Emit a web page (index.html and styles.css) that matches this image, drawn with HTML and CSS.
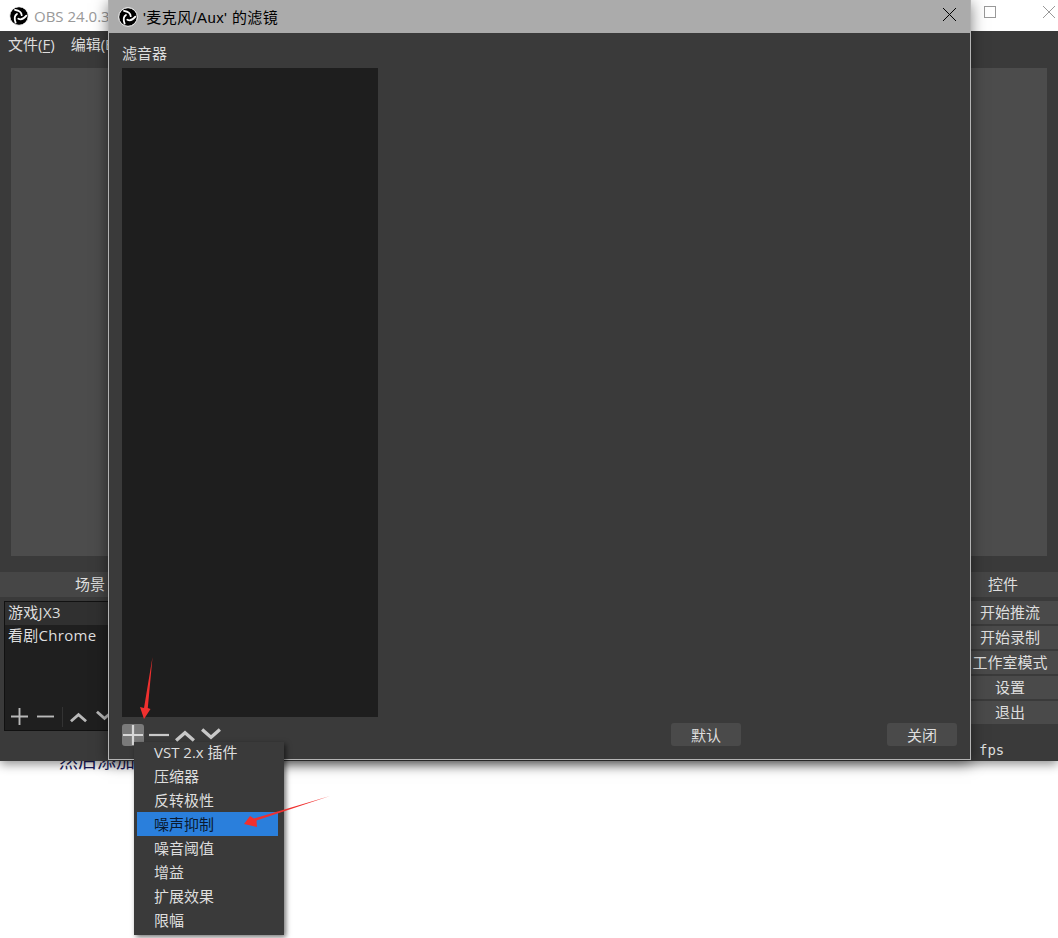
FILE: index.html
```html
<!DOCTYPE html>
<html>
<head>
	<meta charset="utf-8">
	<title>OBS 滤镜</title>
	<link rel="stylesheet" href="styles.css">
</head>
<body>

<svg width="0" height="0" class="defs">
	<symbol id="obs" viewBox="0 0 20 20">
		<circle cx="10" cy="10" r="9.3" fill="#000" stroke="#fff" stroke-width="1"/>
		<path d="M12.7 9.2C12.6 6.4 9.6 4.4 6 3.8" fill="none" stroke="#fff" stroke-width="1.8" stroke-linecap="round"/>
		<path d="M12.7 9.2C12.6 6.4 9.6 4.4 6 3.8" fill="none" stroke="#fff" stroke-width="1.8" stroke-linecap="round" transform="rotate(120 10 10)"/>
		<path d="M12.7 9.2C12.6 6.4 9.6 4.4 6 3.8" fill="none" stroke="#fff" stroke-width="1.8" stroke-linecap="round" transform="rotate(240 10 10)"/>
	</symbol>
	<symbol id="plus" viewBox="0 0 18 18"><path d="M9 0v18M0 9h18" fill="none" stroke="currentColor" stroke-width="2"/></symbol>
	<symbol id="minus" viewBox="0 0 18 18"><path d="M0 9h18" fill="none" stroke="currentColor" stroke-width="2"/></symbol>
	<symbol id="up" viewBox="0 0 18 18"><path d="M1 14l8-7l8 7" fill="none" stroke="currentColor" stroke-width="3"/></symbol>
	<symbol id="down" viewBox="0 0 18 18"><path d="M1 4l8 7l8-7" fill="none" stroke="currentColor" stroke-width="3"/></symbol>
</svg>

<p class="page-text">然后添加</p>

<div class="main-window">
	<div class="titlebar">
		<svg class="logo"><use href="#obs"/></svg>
		<span class="app-name">OBS 24.0.3</span>
		<span class="win-btn max-btn"></span>
		<svg class="win-close" viewBox="0 0 12 12"><path d="M0 0l12 12M12 0L0 12" stroke="#999" stroke-width="1"/></svg>
	</div>
	<div class="menubar">
		<span>文件(<u>F</u>)</span>
		<span>编辑(E)</span>
	</div>
	<div class="preview"></div>
	<div class="docks">
		<div class="dock-scenes">
			<div class="dock-head">场景</div>
			<div class="scene-box">
				<div class="scene-list">
					<div class="scene selected">游戏JX3</div>
					<div class="scene">看剧Chrome</div>
				</div>
				<div class="scene-tools">
					<svg class="tool"><use href="#plus"/></svg>
					<svg class="tool"><use href="#minus"/></svg>
					<span class="tool-sep"></span>
					<svg class="tool"><use href="#up"/></svg>
					<svg class="tool"><use href="#down"/></svg>
				</div>
			</div>
		</div>
		<div class="dock-controls">
			<div class="dock-head">控件</div>
			<div class="ctrl-list">
				<div class="ctrl">开始推流</div>
				<div class="ctrl">开始录制</div>
				<div class="ctrl">工作室模式</div>
				<div class="ctrl">设置</div>
				<div class="ctrl">退出</div>
			</div>
		</div>
	</div>
	<div class="fps">fps</div>
</div>

<div class="dialog">
	<div class="dialog-title">
		<svg class="logo"><use href="#obs"/></svg>
		<span class="dialog-name">'麦克风/Aux' 的滤镜</span>
		<svg class="dialog-close" viewBox="0 0 13 13"><path d="M0 0l13 13M13 0L0 13" stroke="#000" stroke-width="1"/></svg>
	</div>
	<div class="dialog-body">
		<div class="filter-label">滤音器</div>
		<div class="filter-list"></div>
		<div class="dialog-foot">
			<div class="icon-btn active"><svg><use href="#plus"/></svg></div>
			<div class="icon-btn"><svg><use href="#minus"/></svg></div>
			<div class="icon-btn"><svg><use href="#up"/></svg></div>
			<div class="icon-btn"><svg><use href="#down"/></svg></div>
			<button class="btn btn-default">默认</button>
			<button class="btn">关闭</button>
		</div>
	</div>
</div>

<ul class="popup">
	<li>VST 2.x 插件</li>
	<li>压缩器</li>
	<li>反转极性</li>
	<li class="hover">噪声抑制</li>
	<li>噪音阈值</li>
	<li>增益</li>
	<li>扩展效果</li>
	<li>限幅</li>
</ul>

<svg class="arrows" viewBox="0 0 1058 938">
	<polygon points="152.5,657 147.8,708 150.5,709 144,719 140,707 144,708" fill="#f0302f"/>
	<polygon points="330,796 256.5,820.5 257,827 244,824 250,816 254,818.5" fill="#f0302f"/>
</svg>

</body>
</html>
```

FILE: styles.css
```css
*{box-sizing: border-box;}

body{margin: 0;width: 1058px;height: 938px;position: relative;overflow: hidden;background: #fff;font-family: "Open Sans","Noto Sans CJK SC",sans-serif;font-size: 15px;color: #dedede;}

.defs{position: absolute;}

.page-text{position: absolute;left: 59px;top: 750px;margin: 0;font-size: 19px;line-height: 22px;color: #1c1c5c;}

/* main obs window, behind the dialog */
.main-window{position: absolute;left: 0;top: 0;width: 1058px;height: 761px;background: #3a3a3a;box-shadow: 0 3px 10px rgba(0,0,0,.45);}

.titlebar{height: 31px;background: #fff;display: flex;align-items: center;padding-left: 9px;position: relative;}
.logo{width: 20px;height: 20px;flex: none;}
.app-name{margin-left: 5px;color: #999;font-size: 15px;}
.win-btn{position: absolute;}
.max-btn{left: 984px;top: 6px;width: 12px;height: 12px;border: 1px solid #999;}
.win-close{position: absolute;left: 1043px;top: 6px;width: 12px;height: 12px;}

.menubar{height: 37px;padding: 0 0 0 8px;display: flex;gap: 16px;line-height: 26px;font-size: 15px;}
.menubar u{text-underline-offset: 2px;}

.preview{height: 488px;margin: 0 11px;background: #4c4c4c;}

.docks{display: flex;justify-content: space-between;padding-top: 16px;}
.dock-scenes{width: 300px;}
.dock-controls{width: 87px;}
.dock-head{height: 25px;background: #464646;text-align: center;line-height: 25px;font-size: 15px;}
.dock-scenes .dock-head{padding-right: 120px;}
.dock-controls .dock-head{padding-right: 23px;}

.scene-box{margin: 4px 0 0 4px;height: 130px;background: #1f1f1f;border: 1px solid #111;display: flex;flex-direction: column;}
.scene-list{flex: 1;}
.scene{height: 23px;line-height: 21px;padding-left: 3px;font-size: 15px;letter-spacing: .3px;}
.scene.selected{background: #303030;}
.scene-tools{height: 27px;display: flex;align-items: center;padding-left: 6px;color: #b9b9b9;}
.tool{width: 17px;height: 17px;margin-right: 9px;}
.tool-sep{width: 1px;height: 20px;background: #333;margin: 0 7px 0 -1px;}

.ctrl-list{padding-top: 4px;display: flex;flex-direction: column;gap: 2px;}
.ctrl{height: 23px;background: #4a4a4a;text-align: center;line-height: 22px;font-size: 15px;white-space: nowrap;padding-right: 9px;}

.fps{position: absolute;left: 979px;top: 741px;font-size: 14px;line-height: 18px;font-family: "DejaVu Sans Mono",monospace;}

/* filter dialog */
.dialog{position: absolute;left: 108px;top: 0;width: 863px;height: 760px;border: 1px solid #b4b4b4;border-top: 0;background: #3a3a3a;box-shadow: 0 3px 14px rgba(0,0,0,.5);display: flex;flex-direction: column;}

.dialog-title{height: 33px;background: #ababab;display: flex;align-items: center;padding: 0 0 0 9px;position: relative;color: #000;}
.dialog-name{margin-left: 5px;font-size: 15px;letter-spacing: .4px;font-family: "Liberation Sans","Noto Sans CJK SC",sans-serif;}
.dialog-close{position: absolute;left: 834px;top: 8px;width: 13px;height: 13px;}

.dialog-body{flex: 1;padding: 9px 13px 0;display: flex;flex-direction: column;}
.filter-label{height: 26px;line-height: 22px;font-size: 15px;}
.filter-list{width: 256px;height: 649px;background: #1e1e1e;}

.dialog-foot{display: flex;align-items: center;margin-top: 6px;height: 23px;color: #c9c9c9;}
.icon-btn{flex: none;width: 22px;height: 22px;border-radius: 3px;margin-right: 4px;display: flex;align-items: center;justify-content: center;}
.icon-btn svg{width: 20px;height: 20px;}
.icon-btn.active{background: #7a7a7a;color: #d8d8d8;}

.btn{flex: none;width: 70px;height: 23px;border: 0;border-radius: 3px;background: #4a4a4a;color: #dedede;font-family: inherit;font-size: 15px;line-height: 22px;padding: 0;margin-left: 146px;}
.btn-default{margin-left: 445px;}

/* add filter menu */
.popup{position: absolute;left: 134px;top: 742px;width: 150px;height: 193px;margin: 0;padding: 0 6px 0 3px;list-style: none;background: #3a3a3a;box-shadow: 2px 2px 5px rgba(0,0,0,.55);}
.popup li{height: 24px;line-height: 24px;padding-left: 17px;font-size: 15px;position: relative;top: -2px;}
.popup li.hover{background: #2a7fdc;color: #0a1a30;}

.arrows{position: absolute;left: 0;top: 0;width: 1058px;height: 938px;pointer-events: none;}
```
